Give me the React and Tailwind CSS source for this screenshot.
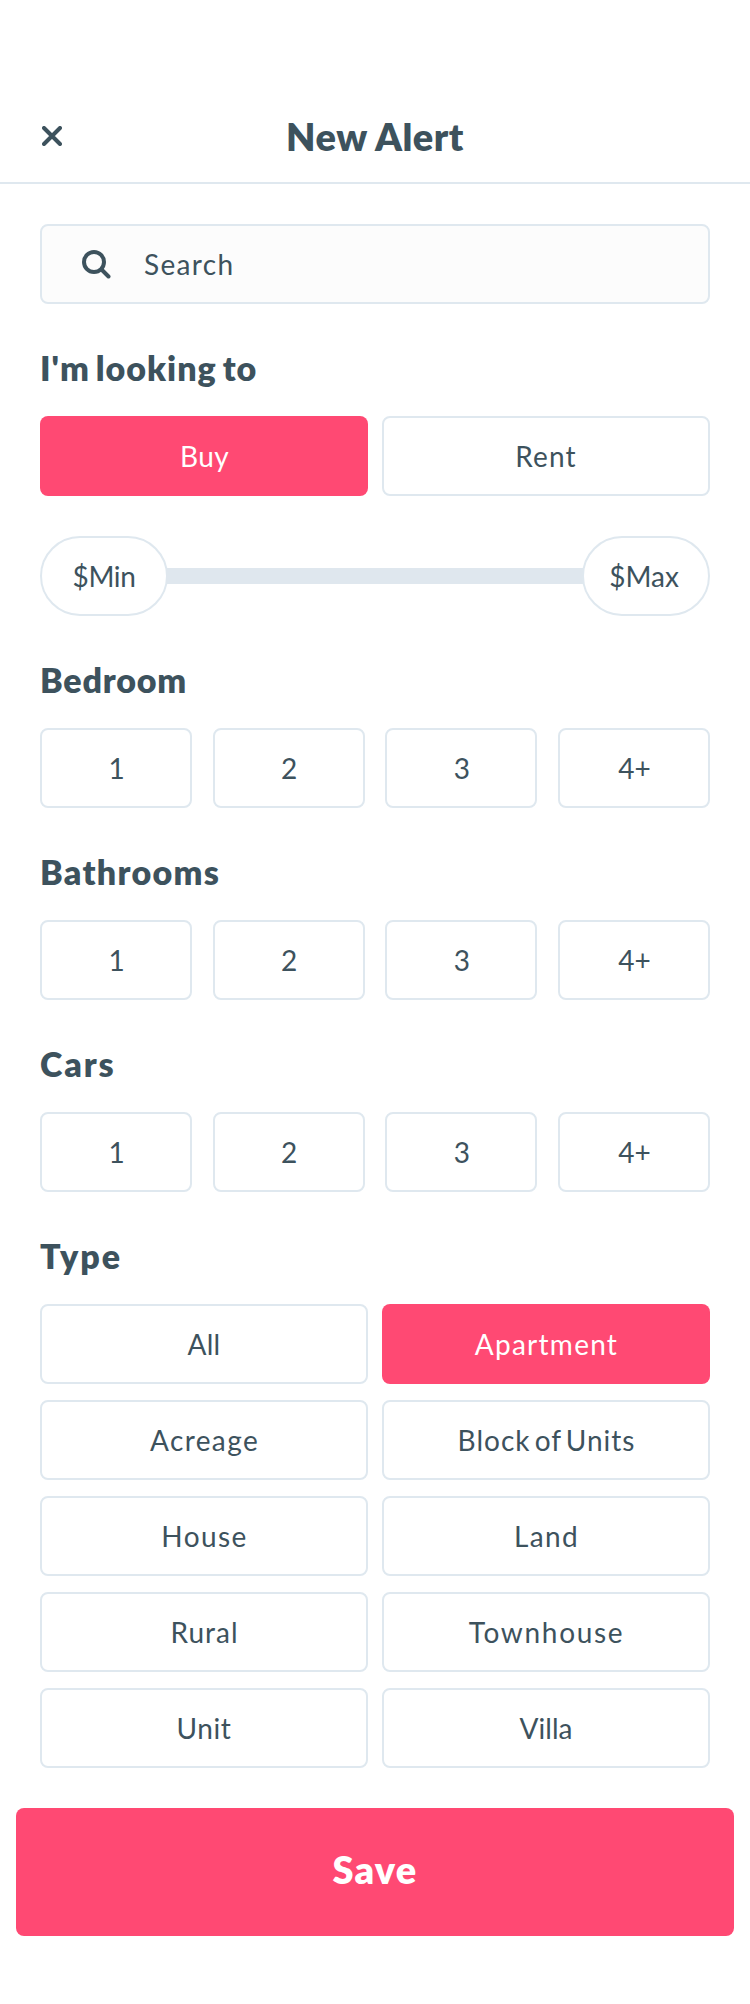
const FIELD = 'flex h-20 items-center justify-center rounded-lg text-[28px] leading-none';
const IDLE = 'border-2 border-[#dfe8ef] bg-white text-[#3d525d]';
const ACTIVE = 'bg-[#ff4973] text-white';

function Option({ label, active, tracking = '' }) {
  return (
    <button className={`${FIELD} ${active ? ACTIVE : IDLE}`}>
      <span className={`-mt-px ${tracking}`}>{label}</span>
    </button>
  );
}

function Heading({ children, tracking = '' }) {
  return (
    <h2 className={`flex h-28 items-center pt-[15px] text-[34px] leading-none font-extrabold ${tracking}`}>
      {children}
    </h2>
  );
}

function CountSection({ title, tracking }) {
  return (
    <section>
      <Heading tracking={tracking}>{title}</Heading>
      <div className="flex justify-between">
        {['1', '2', '3', '4+'].map((n) => (
          <div key={n} className="grid w-[152px]">
            <Option label={n} tracking="pl-px" />
          </div>
        ))}
      </div>
    </section>
  );
}

const TYPES = [
  { label: 'All', tracking: 'tracking-[0.3px]' },
  { label: 'Apartment', active: true, tracking: 'pl-px tracking-[1.25px]' },
  { label: 'Acreage', tracking: 'pl-px tracking-[1.4px]' },
  { label: 'Block of Units', tracking: 'pl-px tracking-[1px] [word-spacing:-4px]' },
  { label: 'House', tracking: 'pl-px tracking-[1.4px]' },
  { label: 'Land', tracking: 'pl-px tracking-[1.4px]' },
  { label: 'Rural', tracking: 'pl-px tracking-[1px]' },
  { label: 'Townhouse', tracking: 'pl-px tracking-[1.7px]' },
  { label: 'Unit', tracking: 'tracking-[0.6px]' },
  { label: 'Villa' },
];

const HANDLE =
  'flex h-20 w-32 items-center justify-center rounded-full border-2 border-[#dfe8ef] pb-px text-[28px] leading-none';

export default function App() {
  return (
    <div className="flex h-[2004px] w-[750px] flex-col bg-white font-[Lato,sans-serif] text-[#3d525d]">
      <header className="grid h-[184px] grid-cols-[80px_1fr_80px] border-b-2 border-[#dfe8ef] pt-[91px]">
        <button aria-label="Close" className="flex h-[90px] items-center pl-[42px]">
          <svg width="20" height="20" viewBox="0 0 20 20" fill="none" stroke="#3d525d" strokeWidth="4" strokeLinecap="round">
            <path d="M2 2l16 16M18 2L2 18" />
          </svg>
        </button>
        <h1 className="flex h-[90px] items-center justify-center text-[38px] leading-none font-extrabold tracking-[0.5px]">
          New Alert
        </h1>
      </header>

      <main className="px-10 pt-10">
        <label className="flex h-20 items-center rounded-lg border-2 border-[#dfe8ef] bg-[#fcfcfc] pl-10">
          <svg width="29" height="29" viewBox="0 0 29 29" fill="none" stroke="#3d525d" strokeWidth="4" strokeLinecap="round">
            <circle cx="12" cy="12" r="10" />
            <path d="M19.5 19.5l7 7" />
          </svg>
          <span className="-mt-px pl-[33px] text-[28px] leading-none tracking-[1.35px]">Search</span>
        </label>

        <Heading tracking="tracking-[1px] [word-spacing:-3px]">I'm looking to</Heading>
        <div className="grid grid-cols-2 gap-[14px]">
          <Option label="Buy" active tracking="pl-px tracking-[0.3px]" />
          <Option label="Rent" tracking="tracking-[1.2px]" />
        </div>

        <div className="mt-10 flex items-center">
          <div className={`${HANDLE} tracking-[-0.4px]`}>$Min</div>
          <div className="-mx-0.5 h-4 flex-1 bg-[#dfe7ee]" />
          <div className={`${HANDLE} pr-1`}>$Max</div>
        </div>

        <CountSection title="Bedroom" tracking="tracking-[0.8px]" />
        <CountSection title="Bathrooms" tracking="tracking-[1.3px]" />
        <CountSection title="Cars" tracking="tracking-[1.9px]" />

        <Heading tracking="tracking-[2px]">Type</Heading>
        <div className="grid grid-cols-2 gap-x-[14px] gap-y-4">
          {TYPES.map((t) => (
            <Option key={t.label} {...t} />
          ))}
        </div>
      </main>

      <div className="grid px-4 pt-10">
        <button className="flex h-32 items-center justify-center rounded-lg bg-[#ff4973] pb-[7px] text-[38px] leading-none font-extrabold tracking-[1.2px] text-white">
          Save
        </button>
      </div>
    </div>
  );
}
